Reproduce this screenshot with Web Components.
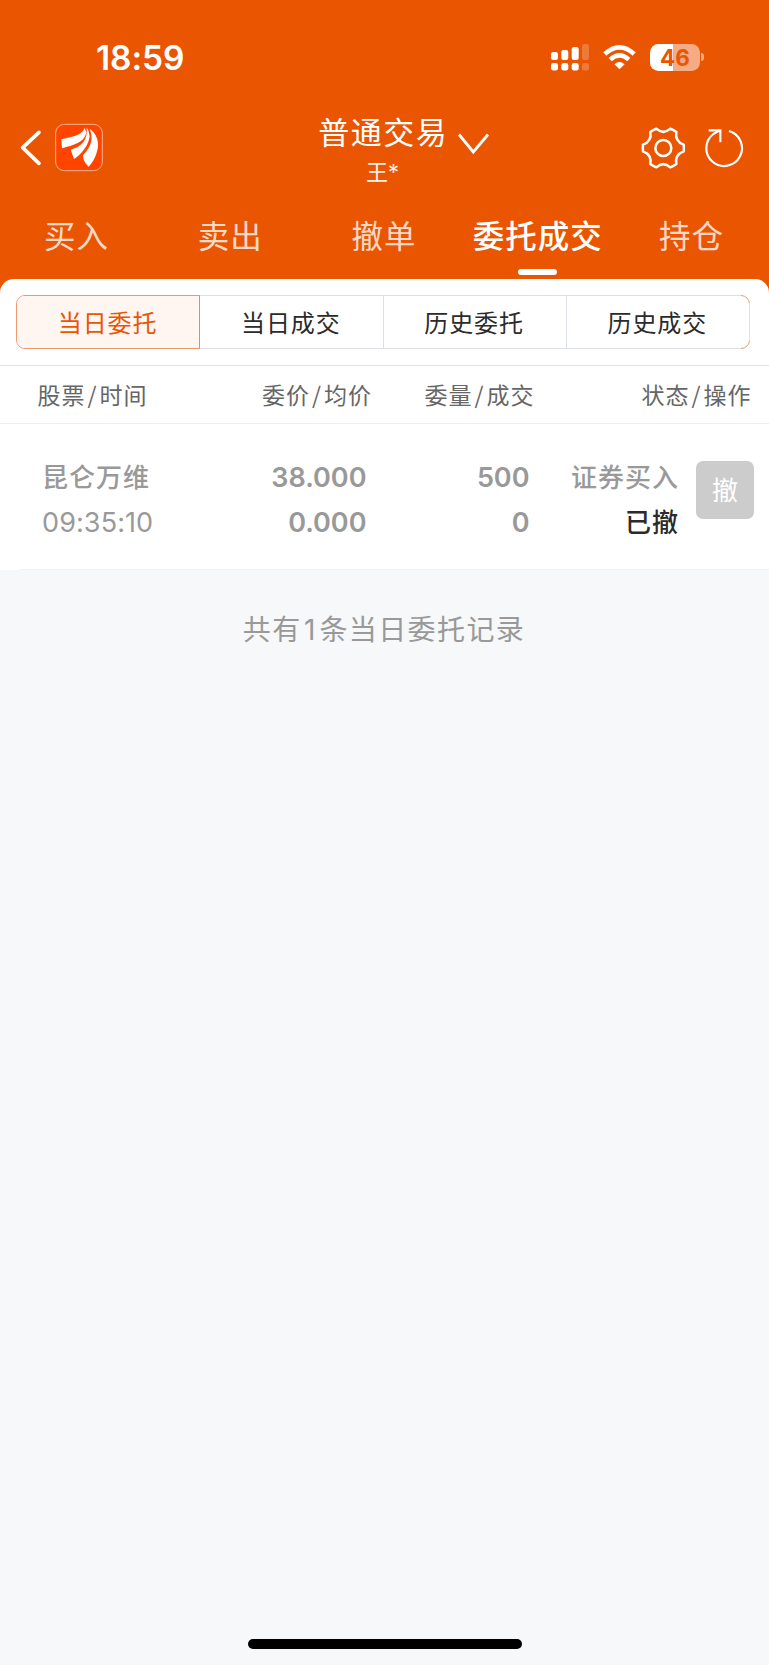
<!DOCTYPE html>
<html lang="zh-CN">
<head>
<meta charset="utf-8">
<title>委托成交</title>
<style>
html,body{margin:0;padding:0}
body{width:769px;min-height:1665px;background:#f6f8fa;font-family:Inter,"Noto Sans CJK SC",sans-serif}
</style>
</head>
<body>
<trade-app></trade-app>
<script>
const define = (name, html) => customElements.define(name, class extends HTMLElement {
  constructor() {
    super();
    this.attachShadow({mode: 'open'}).innerHTML = html;
  }
});

define('status-bar', `
<style>
:host{display:flex;height:110px;box-sizing:border-box;padding:39px 0 0 96px;color:#fff}
.time{font-size:33.5px;line-height:38px;font-weight:600;width:455px;letter-spacing:-.1px}
.signal,.wifi{display:block;flex:none}
.wifi{margin:0 14px 0 14px}
.battery{width:50px;height:27px;margin-top:4.5px;border-radius:8.5px;background:linear-gradient(90deg,#fff 46%,#f5ab83 46%);color:#ea5502;font-size:22.5px;line-height:27px;font-weight:700;text-align:center;letter-spacing:.2px}
.nub{width:3px;height:8px;margin:14px 0 0 1px;border-radius:0 4px 4px 0;background:#f5ab83}
</style>
<span class="time">18:59</span>
<svg class="signal" width="38" height="34" viewBox="0 0 38 34" fill="#fff">
<rect y="13" width="7" height="8" rx="2.3"/><rect x="10.3" y="11" width="7" height="10" rx="2.3"/><rect x="20.7" y="8" width="7" height="13" rx="2.3"/><rect x="31" y="5" width="7" height="16" rx="2.3" opacity=".22"/>
<rect y="24" width="7" height="7.5" rx="2.3"/><rect x="10.3" y="24" width="7" height="7.5" rx="2.3"/><rect x="20.7" y="24" width="7" height="7.5" rx="2.3"/><rect x="31" y="24" width="7" height="7.5" rx="2.3" opacity=".22"/>
</svg>
<svg class="wifi" width="33" height="34" viewBox="0 0 33 34" fill="none" stroke="#fff" stroke-width="4.6">
<path d="M1.8 15Q16.5 1.600 31.200 15M7.200 20.600Q16.500 12.300 25.800 20.600"/><path d="M16.500 30.200L11.400 25.200Q16.500 21 21.600 25.200Z" fill="#fff" stroke="none"/>
</svg>
<span class="battery">46</span><i class="nub"></i>`);

define('nav-bar', `
<style>
:host{display:flex;height:90px;box-sizing:border-box;padding-left:10px;color:#fff}
svg{display:block;flex:none}
.title{width:127px;margin-left:199px;display:flex;flex-direction:column;align-items:center;white-space:nowrap}
b{font-weight:400;font-size:31px;line-height:44px;letter-spacing:1.500px;margin-right:-1.500px;padding-top:1px}
small{font-size:22px;line-height:30px;padding-top:2px;opacity:.92}
.down{margin:20px 0 0 8px}
.tools{margin-left:136px}
</style>
<svg width="110" height="75" viewBox="0 0 330 225">
<path d="M87 67L38 113L87 160" fill="none" stroke="#fff" stroke-width="11" stroke-linecap="round" stroke-linejoin="round"/>
<rect x="137" y="43" width="140" height="139" rx="26" fill="#f40" stroke="#fbb292" stroke-width="3"/>
<g fill="#fff"><path d="M224 54C214 78 184 80 154 88L156 115C190 106 224 98 229 67Z"/><path d="M230 52C234 88 216 111 182 119L192 147C216 132 237 104 239 78Q238 64 230 52Z"/><path d="M239 56C251 86 244 109 219 136Q220 157 236 170C256 150 266 116 264 99Q262 73 239 56Z"/></g>
</svg>
<div class="title"><b>普通交易</b><small>王*</small></div>
<svg class="down" width="40" height="30" viewBox="0 0 40 30" fill="none" stroke="#fff" stroke-width="2.800"><path d="M5 4.500L19.300 22L34 4.500"/></svg>
<svg class="tools" width="130" height="75" viewBox="0 0 390 225" fill="none" stroke="#fff" stroke-linejoin="round">
<g transform="translate(100 114)" stroke-width="7.500"><circle r="24"/>
<path d="M61-10Q62 0 61 10Q34 20 39 48Q31 54 21 58Q0 39 -21 58Q-31 54 -39 48Q-34 20 -61 10Q-62 0 -61-10Q-34-20 -39-48Q-31-54 -21-58Q0-39 21-58Q31-54 39-48Q34-20 61-10Z"/></g>
<g stroke-width="6.500"><path d="M297 63A53.500 53.500 0 1 1 250 72L271 60"/><path d="M236 61H271V97" stroke-linejoin="miter"/></g>
</svg>`);

define('trade-tab', `
<style>
:host{flex:1;display:flex;flex-direction:column;align-items:center;color:rgba(255,255,255,.8);font-size:31.500px;line-height:46px;font-weight:400;letter-spacing:1px}
:host([active]){color:#fff;font-weight:500}
span{margin-right:-1px}
i{display:none;width:39px;height:6px;border-radius:3px;background:#fff;margin-top:9px}
:host([active]) i{display:block}
</style>
<span><slot></slot></span><i></i>`);

define('seg-item', `
<style>
:host{flex:1;display:flex;align-items:center;justify-content:center;box-sizing:border-box;border-right:1px solid #dcdfe5;color:#2b2b2b;font-size:24px;letter-spacing:.9px;padding:0 1px 1px 0}
:host(:last-child){border-right:0}
:host([active]){background:#fff5f1;color:#ea5502;border-right-color:#e98a58;border-radius:8px 0 0 8px}
</style>
<slot></slot>`);

define('seg-control', `
<style>
:host{display:flex;position:relative;width:734px;height:54px;box-sizing:border-box;border:1px solid #eb9a70;border-radius:9px}
.edge{position:absolute;left:183px;right:8px;top:-1px;bottom:-1px;border:solid #dcdfe5;border-width:1px 0;pointer-events:none}
.side{position:absolute;right:-1px;top:7px;bottom:7px;width:1px;background:#dcdfe5}
</style>
<slot></slot><i class="edge"></i><i class="side"></i>`);

define('table-head', `
<style>
:host{display:grid;grid-template-columns:147.500px 224.500px 162.500px 217px;height:59px;box-sizing:border-box;border-top:1px solid #dfe2e4;border-bottom:1px solid #edeef0;color:#666;font-size:23px;line-height:56px;letter-spacing:1px;text-align:right}
em{font-style:normal;font-family:"Noto Sans CJK SC";padding:0 2px}
</style>
<span>股票<em>/</em>时间</span><span>委价<em>/</em>均价</span><span>委量<em>/</em>成交</span><span>状态<em>/</em>操作</span>`);

define('order-row', `
<style>
:host{display:grid;grid-template-columns:170px 196.500px 163px 149.500px 75px;height:145px;box-sizing:border-box;padding-top:31px;color:#999;font-size:26px;line-height:45px;font-weight:500;text-align:right}
div{display:flex;flex-direction:column}
.name{padding-left:42px;text-align:left}
.name span{letter-spacing:1px;font-size:26px}
.name time{font-weight:400;font-size:27px;letter-spacing:.1px}
.num{font-size:27px;font-weight:600}
.state{letter-spacing:1px}
.state b{font-weight:500;color:#2b2b2b}
button{font:400 26px/54px "Noto Sans CJK SC",sans-serif;width:58px;height:58px;margin:6px 0 0 17px;padding:0 0 3px;border:0;border-radius:7px;background:#ccc;color:#fff}
</style>
<div class="name"><span>昆仑万维</span><time>09:35:10</time></div>
<div class="num"><span>38.000</span><span>0.000</span></div>
<div class="num"><span>500</span><span>0</span></div>
<div class="state"><span>证券买入</span><b>已撤</b></div>
<button>撤</button>`);

define('trade-app', `
<style>
:host{display:flex;flex-direction:column;height:1665px}
header{background:#ea5502;height:293px}
nav{display:flex;padding:14px 1px 0 0;margin-left:-1px}
main{background:#fff;margin-top:-14px;border-radius:14px 14px 0 0;height:291px;display:flex;flex-direction:column}
seg-control{margin:16px 0 16px 16px}
.line{height:1px;background:#f0f2f4;margin-left:20px}
p{margin:36px 1px 0 0;text-align:center;color:#999;font-size:28px;line-height:48px;letter-spacing:1.400px;font-weight:400}
p span{padding:0 2.500px}
footer{margin:auto auto 16px;width:274px;height:10px;border-radius:5px;background:#000}
</style>
<header><status-bar></status-bar><nav-bar></nav-bar>
<nav><trade-tab>买入</trade-tab><trade-tab>卖出</trade-tab><trade-tab>撤单</trade-tab><trade-tab active>委托成交</trade-tab><trade-tab>持仓</trade-tab></nav></header>
<main>
<seg-control><seg-item active>当日委托</seg-item><seg-item>当日成交</seg-item><seg-item>历史委托</seg-item><seg-item>历史成交</seg-item></seg-control>
<table-head></table-head><order-row></order-row><div class="line"></div>
</main>
<p>共有<span>1</span>条当日委托记录</p>
<footer></footer>`);
</script>
</body>
</html>
